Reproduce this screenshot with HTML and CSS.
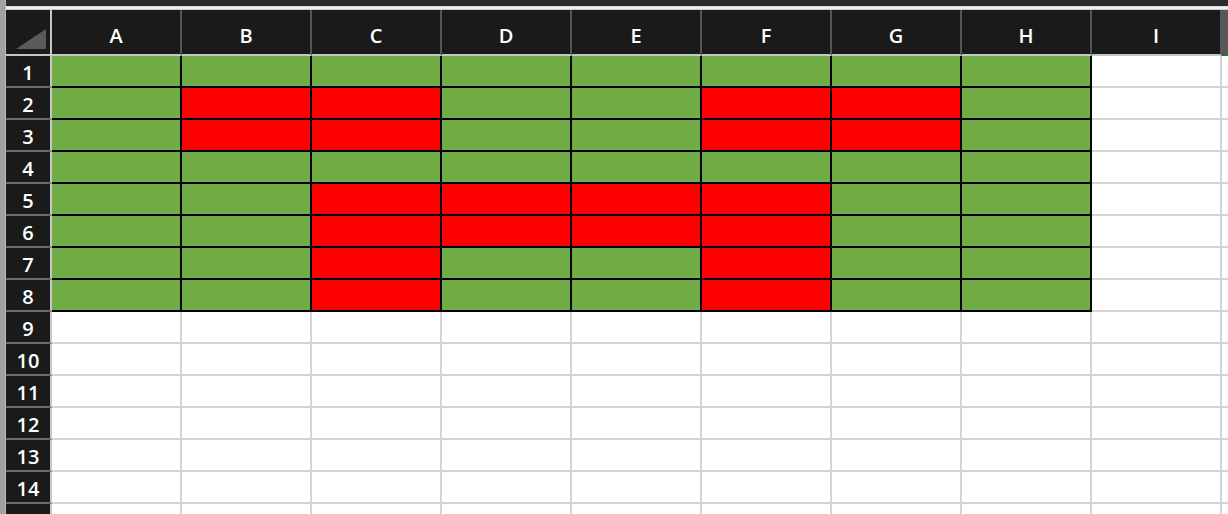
FILE: index.html
```html
<!DOCTYPE html>
<html>
<head>
<meta charset="utf-8">
<link rel="stylesheet" href="styles.css">
</head>
<body>
<div class="app">
  <div class="side"></div>
  <div class="main">
    <div class="topbar"></div>
    <div class="band"></div>
    <div class="sheet">
      <div class="row head">
        <div class="corner"><svg width="44" height="44" viewBox="0 0 44 44"><polygon points="10,39 40,39 40,19" fill="#5a5a5a"/></svg></div>
        <div class="ch">A</div><div class="ch">B</div><div class="ch">C</div><div class="ch">D</div><div class="ch">E</div><div class="ch">F</div><div class="ch">G</div><div class="ch">H</div><div class="ch">I</div><div class="ch cut"></div>
      </div>
      <div class="row"><div class="rh">1</div><div class="cell g"></div><div class="cell g"></div><div class="cell g"></div><div class="cell g"></div><div class="cell g"></div><div class="cell g"></div><div class="cell g"></div><div class="cell g"></div><div class="cell"></div><div class="cell cut"></div></div>
      <div class="row"><div class="rh">2</div><div class="cell g"></div><div class="cell r"></div><div class="cell r"></div><div class="cell g"></div><div class="cell g"></div><div class="cell r"></div><div class="cell r"></div><div class="cell g"></div><div class="cell"></div><div class="cell cut"></div></div>
      <div class="row"><div class="rh">3</div><div class="cell g"></div><div class="cell r"></div><div class="cell r"></div><div class="cell g"></div><div class="cell g"></div><div class="cell r"></div><div class="cell r"></div><div class="cell g"></div><div class="cell"></div><div class="cell cut"></div></div>
      <div class="row"><div class="rh">4</div><div class="cell g"></div><div class="cell g"></div><div class="cell g"></div><div class="cell g"></div><div class="cell g"></div><div class="cell g"></div><div class="cell g"></div><div class="cell g"></div><div class="cell"></div><div class="cell cut"></div></div>
      <div class="row"><div class="rh">5</div><div class="cell g"></div><div class="cell g"></div><div class="cell r"></div><div class="cell r"></div><div class="cell r"></div><div class="cell r"></div><div class="cell g"></div><div class="cell g"></div><div class="cell"></div><div class="cell cut"></div></div>
      <div class="row"><div class="rh">6</div><div class="cell g"></div><div class="cell g"></div><div class="cell r"></div><div class="cell r"></div><div class="cell r"></div><div class="cell r"></div><div class="cell g"></div><div class="cell g"></div><div class="cell"></div><div class="cell cut"></div></div>
      <div class="row"><div class="rh">7</div><div class="cell g"></div><div class="cell g"></div><div class="cell r"></div><div class="cell g"></div><div class="cell g"></div><div class="cell r"></div><div class="cell g"></div><div class="cell g"></div><div class="cell"></div><div class="cell cut"></div></div>
      <div class="row"><div class="rh">8</div><div class="cell g"></div><div class="cell g"></div><div class="cell r"></div><div class="cell g"></div><div class="cell g"></div><div class="cell r"></div><div class="cell g"></div><div class="cell g"></div><div class="cell"></div><div class="cell cut"></div></div>
      <div class="row"><div class="rh">9</div><div class="cell"></div><div class="cell"></div><div class="cell"></div><div class="cell"></div><div class="cell"></div><div class="cell"></div><div class="cell"></div><div class="cell"></div><div class="cell"></div><div class="cell cut"></div></div>
      <div class="row"><div class="rh">10</div><div class="cell"></div><div class="cell"></div><div class="cell"></div><div class="cell"></div><div class="cell"></div><div class="cell"></div><div class="cell"></div><div class="cell"></div><div class="cell"></div><div class="cell cut"></div></div>
      <div class="row"><div class="rh">11</div><div class="cell"></div><div class="cell"></div><div class="cell"></div><div class="cell"></div><div class="cell"></div><div class="cell"></div><div class="cell"></div><div class="cell"></div><div class="cell"></div><div class="cell cut"></div></div>
      <div class="row"><div class="rh">12</div><div class="cell"></div><div class="cell"></div><div class="cell"></div><div class="cell"></div><div class="cell"></div><div class="cell"></div><div class="cell"></div><div class="cell"></div><div class="cell"></div><div class="cell cut"></div></div>
      <div class="row"><div class="rh">13</div><div class="cell"></div><div class="cell"></div><div class="cell"></div><div class="cell"></div><div class="cell"></div><div class="cell"></div><div class="cell"></div><div class="cell"></div><div class="cell"></div><div class="cell cut"></div></div>
      <div class="row"><div class="rh">14</div><div class="cell"></div><div class="cell"></div><div class="cell"></div><div class="cell"></div><div class="cell"></div><div class="cell"></div><div class="cell"></div><div class="cell"></div><div class="cell"></div><div class="cell cut"></div></div>
      <div class="row"><div class="rh">15</div><div class="cell"></div><div class="cell"></div><div class="cell"></div><div class="cell"></div><div class="cell"></div><div class="cell"></div><div class="cell"></div><div class="cell"></div><div class="cell"></div><div class="cell cut"></div></div>
    </div>
  </div>
</div>
</body>
</html>
```
FILE: styles.css
```css
* { box-sizing: border-box; }
html, body {
  margin: 0;
  padding: 0;
  width: 1228px;
  height: 514px;
  overflow: hidden;
  background: #ffffff;
  font-family: "Open Sans", "Liberation Sans", sans-serif;
}
.app {
  display: flex;
  height: 514px;
}
.side {
  width: 6px;
  flex: none;
  background: #a2a2a2;
  border-right: 1px solid #b8b8b8;
}
.main {
  flex: 1;
  display: flex;
  flex-direction: column;
  min-width: 0;
}
.topbar {
  height: 6px;
  flex: none;
  background: #2b2b2b;
}
.band {
  height: 4px;
  flex: none;
  background: linear-gradient(#cfcfcf, #ffffff 50%, #bdbdbd);
}
.sheet {
  display: flex;
  flex-direction: column;
}
.row {
  display: flex;
  height: 32px;
  flex: none;
}
.head {
  height: 46px;
}
.corner {
  width: 46px;
  flex: none;
  background: #1a1a1a;
  border-right: 2px solid #c6c6c6;
  border-bottom: 2px solid #c6c6c6;
}
.corner svg {
  display: block;
}
.ch {
  width: 130px;
  flex: none;
  background: #1a1a1a;
  color: #ffffff;
  border-right: 2px solid #575757;
  border-bottom: 2px solid #c6c6c6;
  display: flex;
  align-items: center;
  justify-content: center;
  padding-top: 6px;
  font-size: 20px;
  font-weight: 600;
}
.ch.cut {
  flex: 1;
  width: auto;
  background: #575757;
  border-right: 0;
  border-bottom-color: #1e7145;
}
.rh {
  width: 46px;
  flex: none;
  background: #1a1a1a;
  color: #ffffff;
  border-right: 2px solid #c8c8c8;
  border-bottom: 2px solid #6b6b6b;
  display: flex;
  align-items: center;
  justify-content: center;
  padding-top: 2px;
  font-size: 20px;
  font-weight: 600;
}
.cell {
  width: 130px;
  flex: none;
  border-right: 2px solid #d4d4d4;
  border-bottom: 2px solid #d4d4d4;
}
.cell.cut {
  flex: 1;
  width: auto;
  border-right: 0;
}
.g {
  background: #70ad47;
  border-color: #000000;
}
.r {
  background: #ff0000;
  border-color: #000000;
}
```
